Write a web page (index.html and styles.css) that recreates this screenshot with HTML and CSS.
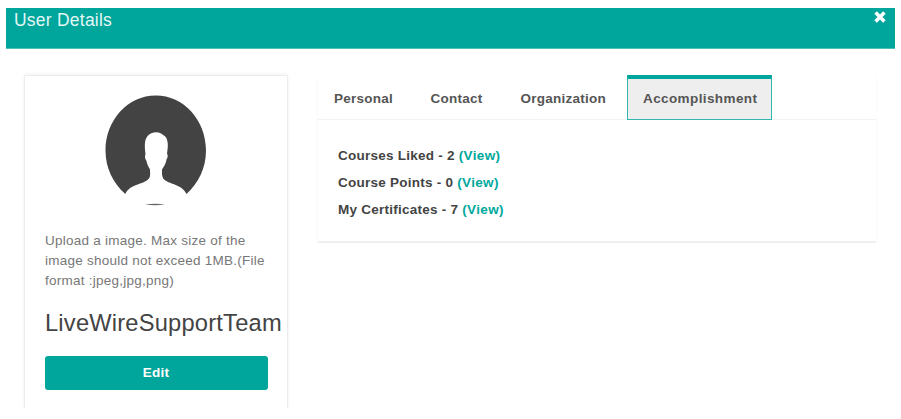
FILE: index.html
```html
<!DOCTYPE html>
<html lang="en">
<head>
<meta charset="utf-8">
<title>User Details</title>
<link rel="stylesheet" href="styles.css">
</head>
<body>
<header class="modal-header">
  <h1 class="title">User Details</h1>
  <button class="close" aria-label="Close">
    <svg width="12" height="12" viewBox="0 0 12 12"><path d="M1.6 1.6 10.4 10.4M10.4 1.6 1.6 10.4" stroke="#fff" stroke-width="3.6"/></svg>
  </button>
</header>
<main class="content">
  <aside class="profile">
    <svg class="avatar" width="102" height="112" viewBox="0 0 102 112">
      <path fill="#434343" d="M20.3 99C8 88 .5 73 .5 55.500C.5 25 23 .5 50.800.5S101 25 101 55.500C101 73 93.500 88 81.500 99C77 89 65 90 58.500 84C56.500 81 57 77 57 74.500C60 70 61 67.500 61.500 64.500C63 62 63 60 62 58.500C62.700 54 63.500 49 62 44.500C61 41 58 40 56 38.500C52 36.500 47 37 43 40.500C38.500 45 40 54 40.500 59C39.500 61 40 64 41.500 66C42 69 43.500 72 45 74.500C45 78 46 82 43 84.500C37 90 25 89 20.300 99Z"/>
      <path fill="#666" d="M40 109.500Q50 108 60 109.500Q50 111 40 109.500Z"/>
    </svg>
    <p class="hint">Upload a image. Max size of the<br>image should not exceed 1MB.(File<br>format :jpeg,jpg,png)</p>
    <h2 class="name">LiveWireSupportTeam</h2>
    <button class="edit">Edit</button>
  </aside>
  <section class="panel">
    <nav class="tabs">
      <a class="tab personal">Personal</a>
      <a class="tab contact">Contact</a>
      <a class="tab organization">Organization</a>
      <a class="tab active">Accomplishment</a>
    </nav>
    <ul class="stats">
      <li>Courses Liked - 2 <a>(View)</a></li>
      <li>Course Points - 0 <a>(View)</a></li>
      <li>My Certificates - 7 <a>(View)</a></li>
    </ul>
  </section>
</main>
</body>
</html>
```
FILE: styles.css
```css
* { box-sizing: border-box; }
body {
  margin: 0;
  padding: 8px 6px 0;
  height: 419px;
  overflow: hidden;
  background: #fff;
  color: #444;
  font: 13.5px/20px "Liberation Sans", Arial, sans-serif;
  letter-spacing: .25px;
}
.modal-header {
  display: flex;
  justify-content: space-between;
  align-items: flex-start;
  height: 41px;
  padding: 1px 9px 0 8px;
  background: #00a59b;
  border-bottom: 1px solid #4dbfb8;
}
.title {
  margin: 0;
  color: #e4f7f5;
  font-size: 17.5px;
  font-weight: 400;
  line-height: 22px;
  letter-spacing: .23px;
}
.close { padding: 2px 0 0; border: 0; background: none; }
.close svg { display: block; }
.content {
  display: flex;
  align-items: flex-start;
  gap: 29px;
  padding: 26px 0 0 18px;
}
.profile {
  width: 264px;
  height: 333px;
  padding: 19px 0 0 20px;
  border: solid #ececec;
  border-width: 1px 1px 0;
  box-shadow: 0 -1px 3px rgba(0, 0, 0, .06);
  clip-path: inset(-5px -5px 0);
}
.avatar { display: block; margin-left: 60px; }
.hint { margin: 24px 0 0; color: #777; }
.name {
  margin: 17px 0 0;
  color: #444;
  font-size: 23.7px;
  font-weight: 400;
  letter-spacing: .2px;
  line-height: 30px;
}
.edit {
  display: block;
  width: 223px;
  height: 34px;
  margin: 18px 0 0 -.5px;
  padding: 0;
  border: 0;
  border-radius: 3px;
  background: #00a59b;
  color: #fff;
  font: bold 13.5px/34px "Liberation Sans", Arial, sans-serif;
  letter-spacing: .2px;
}
.panel {
  width: 560px;
  height: 168px;
  border: 1px solid #fafafa;
  border-bottom: 2px solid #efefef;
  border-top-color: #fff;
  border-radius: 3px;
  font-weight: 700;
}
.tabs {
  display: flex;
  height: 44px;
  border-bottom: 1px solid #f2f2f2;
}
.tab { padding: 14px 0 0 16px; color: #555; margin-top: -1px; height: 45px; }
.personal { width: 96.5px; }
.contact { width: 90px; }
.organization { width: 122.5px; }
.active {
  width: 145px;
  padding: 10px 0 0 15px;
  border: 1px solid #30b8b0;
  border-top: 4px solid #00a59b;
  background: #eee;
  letter-spacing: .4px;
}
.stats { margin: 0; padding: 22px 0 0 20px; list-style: none; line-height: 27px; }
.stats a { color: #00a99d; letter-spacing: .33px; }
```
